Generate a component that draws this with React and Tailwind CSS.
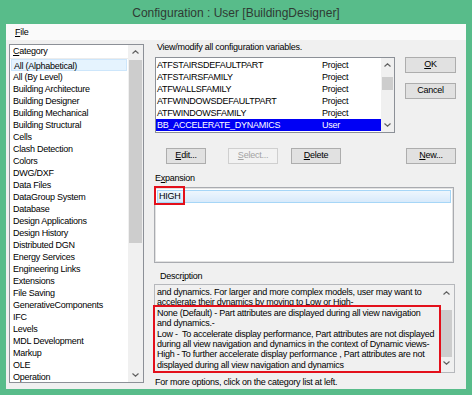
import React from "react";

const categories = [
  "All (Alphabetical)",
  "All (By Level)",
  "Building Architecture",
  "Building Designer",
  "Building Mechanical",
  "Building Structural",
  "Cells",
  "Clash Detection",
  "Colors",
  "DWG/DXF",
  "Data Files",
  "DataGroup System",
  "Database",
  "Design Applications",
  "Design History",
  "Distributed DGN",
  "Energy Services",
  "Engineering Links",
  "Extensions",
  "File Saving",
  "GenerativeComponents",
  "IFC",
  "Levels",
  "MDL Development",
  "Markup",
  "OLE",
  "Operation",
];

const variables = [
  ["ATFSTAIRSDEFAULTPART", "Project"],
  ["ATFSTAIRSFAMILY", "Project"],
  ["ATFWALLSFAMILY", "Project"],
  ["ATFWINDOWSDEFAULTPART", "Project"],
  ["ATFWINDOWSFAMILY", "Project"],
  ["BB_ACCELERATE_DYNAMICS", "User"],
];

const description = [
  "and dynamics. For larger and more complex models, user may want to",
  "accelerate their dynamics by moving to Low or High-",
  "None (Default) - Part attributes are displayed during all view navigation",
  "and dynamics.-",
  "Low -  To accelerate display performance, Part attributes are not displayed",
  "during all view navigation and dynamics in the context of Dynamic views-",
  "High - To further accelerate display performance , Part attributes are not",
  "displayed during all view navigation and dynamics",
];

function Up() {
  return (
    <svg width="7" height="4" viewBox="0 0 7 4" className="block">
      <path d="M0.5 3.5 L3.5 0.8 L6.5 3.5" fill="none" stroke="#606060" strokeWidth="1.2" />
    </svg>
  );
}

function Down() {
  return (
    <svg width="7" height="4" viewBox="0 0 7 4" className="block">
      <path d="M0.5 0.5 L3.5 3.2 L6.5 0.5" fill="none" stroke="#606060" strokeWidth="1.2" />
    </svg>
  );
}

function Btn({ children, w = "w-[50px]", disabled }) {
  return (
    <div
      className={`${w} h-[16px] flex items-center justify-center border ${
        disabled
          ? "border-[#cfcfcf] bg-[#f2f2f2] text-[#a3a3a3]"
          : "border-[#adadad] bg-[#e1e1e1] text-black"
      }`}
    >
      {children}
    </div>
  );
}

export default function App() {
  return (
    <div className="relative w-[472px] h-[395px] bg-[#58bc8a] overflow-hidden font-['Liberation_Sans',Arial,sans-serif] text-[9px] tracking-[-0.25px] text-black">
      {/* title bar */}
      <div className="h-[24px] flex items-center justify-center pt-[2px] text-[12px] tracking-normal text-[#2f3a33]">
        Configuration : User [BuildingDesigner]
      </div>

      {/* client area */}
      <div className="ml-[6px] w-[460px] h-[365px] bg-[#f0f0f0] flex flex-col">
        {/* menu bar */}
        <div className="h-[16px] bg-[#fafafa] flex items-center pl-[9px] pt-[2px]">
          <span>
            <span className="underline">F</span>ile
          </span>
        </div>

        <div className="flex flex-1">
          {/* category list */}
          <div className="ml-[3px] mt-[4px] w-[135px] h-[339px] border border-[#8c9097] bg-white flex">
            <div className="flex-1 flex flex-col">
              <div className="h-[14px] flex items-center pl-[3px] border-b border-[#ececec]">
                <span>
                  <span className="underline">C</span>ategory
                </span>
              </div>
              {categories.map((c, i) => (
                <div
                  key={c}
                  className={`h-[12px] leading-[12px] pl-[2px] ml-[1px] mr-[1px] ${
                    i === 0 ? "bg-[#e5f3fe] border border-[#cde6fb] leading-[10px] pl-[1px]" : ""
                  }`}
                >
                  {c}
                </div>
              ))}
            </div>
            <div className="w-[15px] bg-[#f0f0f0] flex flex-col items-center">
              <div className="h-[14px] flex items-center">
                <Up />
              </div>
              <div className="mt-[1px] w-[13px] h-[183px] bg-[#cdcdcd]" />
              <div className="flex-1" />
              <div className="h-[14px] flex items-center">
                <Down />
              </div>
            </div>
          </div>

          {/* right column */}
          <div className="ml-[10px] w-[302px] flex flex-col pt-[1px]">
            <div className="h-[12px] leading-[12px] pl-[3px]">View/modify all configuration variables.</div>

            <div className="mt-[4px] flex">
              <div className="ml-[1px] w-[240px] h-[76px] border border-[#8c9097] bg-white flex">
                <div className="flex-1 flex flex-col pt-[1px]">
                  {variables.map(([n, s], i) => (
                    <div
                      key={n}
                      className={`h-[12px] leading-[12px] flex ${
                        i === 5 ? "bg-[#0000f5] text-white" : ""
                      }`}
                    >
                      <span className="w-[166px] pl-[1px]">{n}</span>
                      <span>{s}</span>
                    </div>
                  ))}
                </div>
                <div className="w-[13px] bg-[#f0f0f0] flex flex-col items-center">
                  <div className="h-[14px] flex items-center">
                    <Up />
                  </div>
                  <div className="mt-[5px] w-[11px] h-[13px] bg-[#cdcdcd]" />
                  <div className="flex-1" />
                  <div className="h-[14px] flex items-center">
                    <Down />
                  </div>
                </div>
              </div>
              <div className="ml-[10px] flex flex-col gap-[10px]">
                <Btn w="w-[51px]">
                  <span>
                    <span className="underline">O</span>K
                  </span>
                </Btn>
                <Btn w="w-[51px]">Cancel</Btn>
              </div>
            </div>

            <div className="mt-[15px] flex">
              <div className="ml-[12px]">
                <Btn w="w-[40px]">
                  <span>
                    <span className="underline">E</span>dit...
                  </span>
                </Btn>
              </div>
              <div className="ml-[22px]">
                <Btn disabled>
                  <span>
                    <span className="underline">S</span>elect...
                  </span>
                </Btn>
              </div>
              <div className="ml-[13px]">
                <Btn>
                  <span>
                    <span className="underline">D</span>elete
                  </span>
                </Btn>
              </div>
              <div className="ml-[65px]">
                <Btn w="w-[50px]">
                  <span>
                    <span className="underline">N</span>ew...
                  </span>
                </Btn>
              </div>
            </div>

            <div className="mt-[8px] h-[12px] leading-[12px] pl-[1px]">
              E<span className="underline">x</span>pansion
            </div>
            <div className="mt-[3px] w-[300px] h-[76px] border border-[#a9abb0] bg-white shadow-[inset_0_0_0_1px_#e2e2e2] p-[2px]">
              <div className="h-[13px] leading-[11px] border border-[#a6d6f7] bg-[linear-gradient(#eef6fd,#d8eafb)] pl-[1px]">
                HIGH
              </div>
            </div>

            <div className="mt-[7px] h-[12px] leading-[12px] pl-[6px]">
              Descr<span className="underline">i</span>ption
            </div>
            <div className="mt-[2px] w-[301px] h-[89px] border border-[#b6b8bc] bg-[#f0f0f0] flex">
              <div className="flex-1 pl-[2px] pt-[2px] leading-[10.4px] whitespace-pre">
                {description.map((l) => (
                  <div key={l}>{l}</div>
                ))}
              </div>
              <div className="w-[12px] mr-[2px] flex flex-col items-center">
                <div className="h-[14px] flex items-center mt-[1px]">
                  <Up />
                </div>
                <div className="mt-[10px] w-[11px] h-[47px] bg-[#cdcdcd]" />
                <div className="h-[12px] flex items-center">
                  <Down />
                </div>
              </div>
            </div>

            <div className="mt-[3px] h-[12px] leading-[12px] pl-[1px]">
              For more options, click on the category list at left.
            </div>
          </div>
        </div>
      </div>

      {/* highlight boxes */}
      <div className="absolute left-[154px] top-[186px] w-[31px] h-[19px] border-2 border-[#e3101b]" />
      <div className="absolute left-[153px] top-[305px] w-[288px] h-[68px] border-2 border-[#e3101b]" />
    </div>
  );
}
